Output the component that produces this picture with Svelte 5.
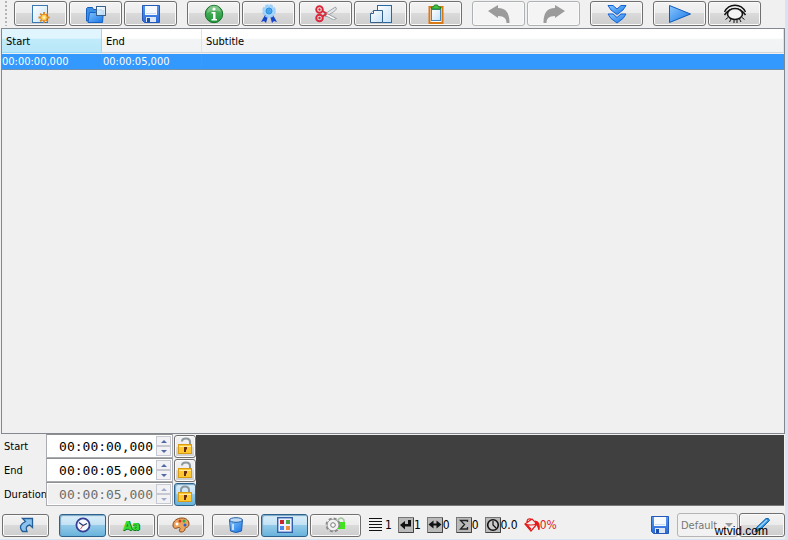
<script>
    let selected = $state(0);
    let style = $state("Default");
    let text = $state("");

    const tools = [
        [
            { icon: "new", label: "New" },
            { icon: "open", label: "Open" },
            { icon: "save", label: "Save" },
        ],
        [
            { icon: "info", label: "Information" },
            { icon: "quality", label: "Quality check" },
        ],
        [
            { icon: "cut", label: "Cut", tight: true },
            { icon: "copy", label: "Copy" },
            { icon: "paste", label: "Paste" },
        ],
        [
            { icon: "undo", label: "Undo", disabled: true },
            { icon: "redo", label: "Redo", disabled: true },
        ],
        [{ icon: "down", label: "Go down" }],
        [
            { icon: "play", label: "Preview" },
            { icon: "eye", label: "Show" },
        ],
    ];

    let subs = $state([{ start: "00:00:00,000", end: "00:00:05,000", text: "" }]);

    let times = $state([
        { id: "start", label: "Start", value: "00:00:00,000", locked: false },
        { id: "end", label: "End", value: "00:00:05,000", locked: false },
        { id: "duration", label: "Duration", value: "00:00:05,000", locked: true },
    ]);

    const panels = [
        [{ icon: "jump", label: "Hide panel" }],
        [
            { icon: "clock", label: "Time", on: true },
            { icon: "font", label: "Font" },
            { icon: "palette", label: "Colours" },
        ],
        [
            { icon: "bin", label: "Delete" },
            { icon: "grid", label: "Layout", on: true },
            { icon: "gear", label: "Settings", wide: true },
        ],
    ];

    const stats = [
        { icon: "lines", value: "1" },
        { icon: "enter", value: "1" },
        { icon: "width", value: "0" },
        { icon: "sum", value: "0" },
        { icon: "timer", value: "0.0" },
        { icon: "fill", value: "0%", red: true },
    ];
</script>

{#snippet icon(name)}
    {#if name == "new"}
        <svg width="20" height="20" viewBox="0 0 20 20">
            <rect x="1.500" y="1.500" width="15" height="17" fill="url(#paper)" stroke="#3a78b4" />
            <path d="M13 8v11M7.500 13.500h11M9.200 9.700l7.600 7.600M16.800 9.700l-7.600 7.600" stroke="#d98322" stroke-width="1.800" />
            <circle cx="13" cy="13.500" r="3.300" fill="#ffd25c" stroke="#e58a22" />
            <circle cx="13" cy="13.500" r="1.300" fill="#fff3b8" />
        </svg>
    {:else if name == "open"}
        <svg width="22" height="20" viewBox="0 0 22 20">
            <path d="M1.500 17V4.500l1-1h5l1 2h8V17z" fill="#3d8fe6" stroke="#1560bd" />
            <path d="M3 18.500L4.500 8.500h6l2-2h6l-1 12z" fill="url(#blue)" stroke="#1763c3" />
            <rect x="11.500" y="2.500" width="9" height="9" fill="url(#paper)" fill-opacity=".85" stroke="#38618c" />
        </svg>
    {:else if name == "save"}
        <svg width="20" height="20" viewBox="0 0 20 20">
            <path d="M1.500 1.500h17v17H3.500l-2-2z" fill="url(#disk)" stroke="#2459b9" />
            <rect x="4" y="2" width="12" height="9" fill="#f6faff" />
            <path d="M5 9.500h10" stroke="#c9dcf2" />
            <rect x="5" y="13" width="10" height="5" fill="#dbe6f5" />
            <rect x="6" y="14" width="3" height="4" fill="#1c4eae" />
        </svg>
    {:else if name == "info"}
        <svg width="20" height="20" viewBox="0 0 20 20">
            <circle cx="10" cy="10" r="8.700" fill="url(#green)" stroke="#17702b" />
            <path d="M3 9a7 7 0 0 1 14-1q-7-3-14 1" fill="#fff" opacity=".25" />
            <circle cx="10" cy="5" r="1.600" fill="#fff" />
            <path d="M7.500 8h4v7h1.500v1.500H7.500V15H9V9.500H7.500z" fill="#fff" />
        </svg>
    {:else if name == "quality"}
        <svg width="20" height="20" viewBox="0 0 20 20">
            <path d="M6 11l-4 7 3-1 2 2 2-7z" fill="#1746c7" />
            <path d="M14 11l4 7-3-1-2 2-2-7z" fill="#1746c7" />
            <circle cx="10" cy="7" r="5.500" fill="#8fc9fb" stroke="#9bcdfa" stroke-width="2.600" stroke-dasharray="3.200 1.120" />
            <circle cx="10" cy="7" r="5.300" fill="#a3d4fb" />
            <circle cx="10" cy="7" r="3" fill="#49a4ec" stroke="#2f8fdd" />
        </svg>
    {:else if name == "cut"}
        <svg width="24" height="20" viewBox="0 0 24 20">
            <path d="M10 10.500L21.500 3l1 2-3 3-8 4.500z" fill="#e6e8ea" stroke="#8a9096" stroke-width=".8" />
            <path d="M11 8.500l11.500 6-3 1.200L10 11z" fill="#f7f8f9" stroke="#8a9096" stroke-width=".8" />
            <g fill="none" stroke="#d9283a" stroke-width="1.900">
                <circle cx="5.500" cy="5.500" r="3.300" />
                <circle cx="5.500" cy="14" r="3.300" />
                <path d="M8.500 7l4 2.500M8.500 12.500l4-2.500" />
            </g>
            <circle cx="5.500" cy="5.500" r="1.200" fill="#d9283a" />
            <circle cx="5.500" cy="14" r="1.200" fill="#d9283a" />
        </svg>
    {:else if name == "copy"}
        <svg width="24" height="20" viewBox="0 0 24 20">
            <rect x="8.500" y="1.500" width="14" height="17" fill="url(#paper)" stroke="#2868a7" />
            <path d="M1.500 18.500v-9l3-3h9v12z" fill="url(#paper)" stroke="#355f8d" />
            <path d="M1.500 9.500h3v-3" fill="#fff" stroke="#355f8d" />
        </svg>
    {:else if name == "paste"}
        <svg width="18" height="20" viewBox="0 0 18 20">
            <rect x="2.500" y="3" width="13" height="16" fill="#fff" stroke="#d97915" stroke-width="2" />
            <rect x="4.500" y="5.500" width="9" height="11" fill="url(#paper)" stroke="#4a86b3" />
            <path d="M4.500 5V3h2l1-2h3l1 2h2v2z" fill="#45c247" stroke="#188628" />
        </svg>
    {:else if name == "undo" || name == "redo"}
        <svg class:flip={name == "redo"} width="24" height="20" viewBox="0 0 24 20">
            <path d="M1 7l10-6v3c8 0 11.500 5 11.500 15h-3c0-4-2-7-8.500-7v2z" fill="#9b9b9b" />
        </svg>
    {:else if name == "down"}
        <svg width="20" height="20" viewBox="0 0 20 20">
            <g fill="url(#blue)" stroke="#1262d6" stroke-linejoin="round">
                <path d="M1 1.500h5l4 3.500 4-3.500h5L16 6l-6 4.500L4 6z" />
                <path d="M1 10h5l4 3.500L14 10h5l-3 4.500-6 4.500-6-4.500z" />
            </g>
        </svg>
    {:else if name == "play"}
        <svg width="24" height="20" viewBox="0 0 24 20">
            <path d="M1.500 1.500L22.500 10l-21 8.500z" fill="url(#blue)" stroke="#0e5bbc" />
        </svg>
    {:else if name == "eye"}
        <svg width="24" height="20" viewBox="0 0 24 20" fill="none" stroke="#111">
            <path d="M1.500 8C6-1 18-1 22.500 8" stroke-width="1.400" />
            <path d="M1.500 11C7 2.500 17 2.500 22.500 11" stroke-width="1.400" />
            <ellipse cx="12" cy="10" rx="7.500" ry="5.500" fill="#f4f4f4" stroke-width="1.600" />
            <path d="M5 13.500l-2.500 2M8 15l-1.500 3M11 16v3M14 16v3M16.500 15l1.500 3M19 13.500l2.500 2" />
        </svg>
    {:else if name == "jump"}
        <svg width="16" height="16" viewBox="0 0 16 16">
            <path d="M4.500 1.500h10v9L11.800 8C8 9 7.500 11 9 14.500H4.500C.5 10 3 6.500 7.500 4.500z" fill="#8cc3ee" stroke="#245e96" stroke-width="1.300" />
        </svg>
    {:else if name == "clock"}
        <svg width="16" height="16" viewBox="0 0 16 16">
            <circle cx="8" cy="8" r="6.600" fill="#f5f8ff" stroke="#353f94" stroke-width="1.800" />
            <path d="M4 5.500l4 3 4-2" fill="none" stroke="#24366e" stroke-width="1.200" />
            <path d="M8 8.500l-2.500 3.500" stroke="#d65252" />
        </svg>
    {:else if name == "font"}
        <span class="letters">Aa</span>
    {:else if name == "palette"}
        <svg width="18" height="16" viewBox="0 0 18 16">
            <path d="M1 8C1 4 5 1 10 1c5 0 7 3 7 6 0 4-4 3-4 5s-2 3-4 3-2-2-1-3-1-2-3-1-4 0-4-3z" fill="#e9a45d" stroke="#8e4818" />
            <circle cx="5" cy="7" r="1.500" fill="#fff" />
            <circle cx="8" cy="4" r="1.500" fill="#df3024" />
            <circle cx="12" cy="4" r="1.500" fill="#2eaf45" />
            <circle cx="13" cy="8" r="1.500" fill="#2860d5" />
        </svg>
    {:else if name == "bin"}
        <svg width="16" height="16" viewBox="0 0 16 16">
            <path d="M1.500 3l1 11q5.500 3 11 0l1-11z" fill="url(#blue)" stroke="#235fa8" />
            <ellipse cx="8" cy="3" rx="6.500" ry="2.300" fill="#c0dbf3" stroke="#235fa8" />
            <path d="M5 7v6" stroke="#bfe1ff" stroke-width="2" />
        </svg>
    {:else if name == "grid"}
        <svg width="16" height="16" viewBox="0 0 16 16">
            <rect x=".7" y=".7" width="14.600" height="14.600" fill="#eaf0ff" stroke="#315ea6" stroke-width="1.400" />
            <rect x="3" y="3" width="4" height="4" fill="#c6252f" />
            <rect x="9" y="3" width="4" height="4" fill="#49a746" />
            <rect x="3" y="9" width="4" height="4" fill="#4b86ef" />
            <rect x="9" y="9" width="4" height="4" fill="#f18b3c" />
        </svg>
    {:else if name == "gear"}
        <svg width="22" height="16" viewBox="0 0 22 16">
            <path d="M13 5V3q3-4 6 0v2" fill="none" stroke="#a5c4a0" stroke-width="1.500" />
            <rect x="13" y="5" width="7" height="7" fill="#3fe51b" />
            <circle cx="8" cy="8" r="6" fill="#e8e8e8" stroke="#8a8a8a" stroke-width="3" stroke-dasharray="2.700 2.010" />
            <circle cx="8" cy="8" r="5.800" fill="#f2f2f2" stroke="#8a8a8a" stroke-width=".7" />
            <circle cx="8" cy="8" r="2.300" fill="#fff" stroke="#777" />
        </svg>
    {:else if name == "pencil"}
        <svg width="18" height="16" viewBox="0 0 18 16">
            <path d="M2 15l1.500-4.500L13 1.500q3-1 3.500 2L7 13z" fill="#2b8fe0" stroke="#1764aa" />
            <path d="M5.500 11L14 3" stroke="#9fd4fb" stroke-width="1.500" />
        </svg>
    {:else if name == "lines"}
        <svg width="14" height="16" viewBox="0 0 14 16">
            <path d="M0 1.500h13M0 4.500h13M0 7.500h13M0 10.500h13M0 13.500h13" stroke="#111" />
        </svg>
    {:else if name == "fill"}
        <svg width="16" height="16" viewBox="0 0 16 16" fill="none" stroke="#e21b1b" stroke-width="1.200">
            <path d="M1 7l7-5 5 5-6 7zM1 7q6 2 12 0M3 5q0-4 4-3M3 8l4 4" />
            <path d="M11 4q5 0 4 9-1-5-4-7" fill="#e21b1b" />
        </svg>
    {:else}
        <svg width="16" height="16" viewBox="0 0 16 16">
            <rect x=".5" y=".5" width="15" height="15" fill="#bababa" stroke="#777" />
            <path d="M1 15.500h14.500V1" fill="none" stroke="#444" />
            {#if name == "enter"}
                <path d="M13 3v6.500H7v3L2 8l5-4v3h3V3z" fill="#111" />
            {:else if name == "width"}
                <path d="M1.500 7.500l5-4v3h3v-3l5 4-5 4v-3h-3v3z" fill="#111" />
            {:else if name == "sum"}
                <path d="M11.500 5V3.500h-7l4 4-4 4.500h7V10" fill="none" stroke="#222" stroke-width="1.300" />
            {:else}
                <circle cx="8" cy="8" r="5.300" fill="#ccc" stroke="#111" stroke-width="1.600" />
                <path d="M8 4v4l3 3" fill="none" stroke="#111" stroke-width="1.200" />
            {/if}
        </svg>
    {/if}
{/snippet}

<!-- shared gradients -->
<svg class="defs" width="0" height="0" aria-hidden="true">
    <defs>
        <linearGradient id="paper" x2="1" y2="1">
            <stop stop-color="#fff" /><stop offset="1" stop-color="#c5e2f8" />
        </linearGradient>
        <linearGradient id="blue" x2="1" y2="1">
            <stop stop-color="#8bc9ff" /><stop offset="1" stop-color="#1674e4" />
        </linearGradient>
        <linearGradient id="disk" x2="0" y2="1">
            <stop stop-color="#5b9bf0" /><stop offset="1" stop-color="#2a68d8" />
        </linearGradient>
        <linearGradient id="green" x2="0" y2="1">
            <stop stop-color="#5fb76b" /><stop offset="1" stop-color="#1c9937" />
        </linearGradient>
    </defs>
</svg>

<main>
    <div class="toolbar">
        <span class="grip"></span>
        {#each tools as group}
            <div class="group" class:tight={group[0].tight}>
                {#each group as t}
                    <button class="btn tool" disabled={t.disabled} aria-label={t.label}>{@render icon(t.icon)}</button>
                {/each}
            </div>
        {/each}
    </div>

    <div class="list">
        <table>
            <thead>
                <tr><th class="time sorted">Start</th><th class="time">End</th><th>Subtitle</th></tr>
            </thead>
            <tbody>
                {#each subs as s, i}
                    <tr class:selected={selected == i} onclick={() => (selected = i)}>
                        <td>{s.start}</td><td>{s.end}</td><td>{s.text}</td>
                    </tr>
                {/each}
            </tbody>
        </table>
    </div>

    <div class="editor">
        <div class="times">
            {#each times as t}
                <label for={t.id}>{t.label}</label>
                <div class="spin">
                    <input id={t.id} type="text" bind:value={t.value} disabled={t.locked} />
                    <div class="arrows">
                        <button class="up" disabled={t.locked} aria-label="Increase {t.label}"></button>
                        <button class="dn" disabled={t.locked} aria-label="Decrease {t.label}"></button>
                    </div>
                </div>
                <button class="btn lock" class:on={t.locked} aria-label="Lock {t.label}" onclick={() => (t.locked = !t.locked)}>
                    <svg width="16" height="18" viewBox="0 0 16 18">
                        <path
                            d={t.locked ? "M4 9V5q0-3.500 4-3.500T12 5v4" : "M5 4.500q0-3 4-3T13 5v4"}
                            fill="none" stroke="#8d979e" stroke-width="2"
                        />
                        <rect x="1.500" y="7.500" width="13" height="9" fill="#ffc933" stroke="#d99a14" />
                        <path d="M2 9.500h12" stroke="#ffe796" />
                        <path d="M7 10h3v2l-1 1v2H7z" fill="#6b2c0c" />
                    </svg>
                </button>
            {/each}
        </div>
        <textarea aria-label="Subtitle text" bind:value={text}></textarea>
    </div>

    <div class="bottom">
        {#each panels as group}
            <div class="group">
                {#each group as p}
                    <button class="btn panel" class:on={p.on} class:wide={p.wide} aria-label={p.label}>{@render icon(p.icon)}</button>
                {/each}
            </div>
        {/each}
        <div class="stats">
            {#each stats as s}
                <span class="stat" class:red={s.red} class:first={s.icon == "lines"}>{@render icon(s.icon)}{s.value}</span>
            {/each}
        </div>
        <div class="style">
            <button class="plain" aria-label="Save style">{@render icon("save")}</button>
            <div class="combo">
                <select aria-label="Style" bind:value={style} disabled>
                    <option>Default</option>
                </select>
            </div>
            <button class="btn edit" aria-label="Edit style">{@render icon("pencil")}</button>
        </div>
    </div>
    <span class="mark">wtvid.com</span>
</main>

<style>
    :global(body) {
        margin: 0;
    }
    main {
        box-sizing: border-box;
        position: relative;
        display: flex;
        flex-direction: column;
        min-height: 100vh;
        padding: 0 0 2px 1px;
        background: #f0f0f0;
        border-right: 3px solid #d8e4f1;
        border-bottom: 1px solid #d8e4f1;
        font: 11px "DejaVu Sans Condensed", "DejaVu Sans", sans-serif;
        color: #000;
    }
    .defs {
        position: absolute;
    }
    svg {
        display: block;
        flex: none;
    }
    .flip {
        transform: scaleX(-1);
    }

    .btn {
        box-sizing: border-box;
        display: flex;
        align-items: center;
        justify-content: center;
        padding: 0;
        border: 1px solid #707070;
        border-radius: 3px;
        background: linear-gradient(#f3f3f3, #ebebeb 50%, #dadada 50%, #cdcdcd);
        box-shadow: inset 0 0 0 1px #fafafa;
    }
    .btn:disabled {
        border-color: #adb2b5;
        background: #f4f4f4;
    }
    .btn.on {
        border-color: #2c628b;
        background: linear-gradient(#dceffa, #c0e0f4 50%, #93cae9 50%, #68b3db);
        box-shadow: inset 1px 1px 1px #7aa6c4;
    }
    .group {
        display: flex;
        gap: 2px;
        margin-left: 10px;
    }

    /* toolbar */
    .toolbar {
        display: flex;
        padding: 1px 0 2px 4px;
    }
    .toolbar .group:nth-child(2) {
        margin-left: 7px;
    }
    .toolbar .tight {
        margin-left: 4px;
    }
    .grip {
        width: 2px;
        background: repeating-linear-gradient(#b4b4b4 0 2px, #f0f0f0 2px 4px);
    }
    .tool {
        width: 53px;
        height: 25px;
    }

    /* subtitle list */
    .list {
        flex: 1;
        border: 1px solid #828790;
    }
    table {
        width: 100%;
        border-collapse: separate;
        border-spacing: 0;
        table-layout: fixed;
    }
    th {
        box-sizing: border-box;
        height: 24px;
        padding: 2px 0 0 4px;
        text-align: left;
        font-weight: normal;
        background: linear-gradient(#fff 40%, #f3f4f6 45%, #f1f2f4);
        border-right: 1px solid #dfe3e8;
        border-bottom: 1px solid #d5d5d5;
    }
    th.time {
        width: 100px;
    }
    th.sorted {
        background: linear-gradient(#e0f5fd 40%, #c0ebfb 45%, #b8e7f8);
        border-color: #96d9f9;
    }
    td {
        height: 15px;
        padding: 0 0 0 1px;
        line-height: 15px;
        border-right: 1px solid #6f8fae;
        border-bottom: 1px solid #6f8fae;
    }
    tbody::before {
        content: "";
        display: block;
        height: 1px;
    }
    td:first-child {
        padding-left: 0;
    }
    td:last-child {
        border-right: 0;
    }
    .selected {
        background: #3399ff;
        color: #fff;
    }

    /* time editor */
    .editor {
        display: flex;
    }
    .times {
        display: grid;
        grid-template-columns: 44px 127px 22px;
        grid-auto-rows: 24px;
        column-gap: 1px;
        align-items: center;
    }
    label {
        padding-left: 3px;
        white-space: nowrap;
    }
    .spin {
        box-sizing: border-box;
        display: flex;
        height: 24px;
        padding: 1px;
        background: #fff;
        border: 1px solid #abadb3;
        border-top-color: #8e8f8f;
    }
    .spin input {
        flex: 1;
        min-width: 0;
        padding: 0 3px 0 0;
        border: 0;
        background: #fff;
        color: #000;
        text-align: right;
        font: 13px "DejaVu Sans Mono", monospace;
    }
    .spin input:disabled {
        background: #f0f0f0;
        color: #6d6d6d;
    }
    .arrows {
        display: flex;
        flex-direction: column;
        width: 15px;
    }
    .arrows button {
        flex: 1;
        display: flex;
        align-items: center;
        justify-content: center;
        padding: 0;
        border: 1px solid #c6c9d2;
        background: #f2f2f4;
    }
    .arrows button::before {
        content: "";
        border: 3px solid transparent;
    }
    .arrows .up::before {
        border-top: 0;
        border-bottom-color: #5267a5;
    }
    .arrows .dn::before {
        border-bottom: 0;
        border-top-color: #5267a5;
    }
    .arrows button:disabled::before {
        opacity: 0.5;
    }
    .lock {
        height: 23px;
    }
    textarea {
        flex: 1;
        min-width: 0;
        resize: none;
        padding: 4px;
        margin: 1px 1px 0 0;
        border: 0;
        border-bottom: 1px solid #777;
        background: #404040;
        color: #fff;
        font: inherit;
    }

    /* bottom bar */
    .bottom {
        display: flex;
        align-items: center;
        padding: 7px 0 0 1px;
        height: 24px;
    }
    .bottom .group:first-child {
        margin-left: 0;
    }
    .bottom .group:nth-child(3) {
        margin-left: 8px;
    }
    .panel {
        width: 47px;
        height: 23px;
    }
    .wide {
        width: 51px;
    }
    .letters {
        font: bold 13px "DejaVu Sans Condensed", "DejaVu Sans", sans-serif;
        color: #35dc35;
        text-shadow: 1px 0 #087c12, 0 1px #087c12;
    }
    .stats {
        display: flex;
        gap: 6px;
        margin-left: 8px;
        font-size: 12px;
    }
    .stat {
        display: flex;
        align-items: center;
    }
    .first {
        gap: 2px;
    }
    .red {
        color: #e21b1b;
    }
    .style {
        display: flex;
        align-items: center;
        margin-left: auto;
    }
    .plain {
        padding: 0;
        margin-right: 7px;
        border: 0;
        background: none;
    }
    .combo {
        position: relative;
        margin-right: 1px;
    }
    .combo::after {
        content: "";
        position: absolute;
        right: 5px;
        top: 10px;
        border: 4px solid transparent;
        border-top-color: #9a9a9a;
        border-bottom: 0;
    }
    select {
        display: block;
        appearance: none;
        width: 61px;
        height: 24px;
        padding: 0 3px;
        border: 1px solid #b5b5b5;
        border-radius: 3px;
        background: #f2f2f2;
        color: #777;
        opacity: 1;
        font: 11px "DejaVu Sans Condensed", "DejaVu Sans", sans-serif;
    }
    .edit {
        width: 46px;
        height: 24px;
    }
    .mark {
        position: absolute;
        right: 17px;
        bottom: 1px;
        font: 12px "Liberation Sans", sans-serif;
    }
</style>
